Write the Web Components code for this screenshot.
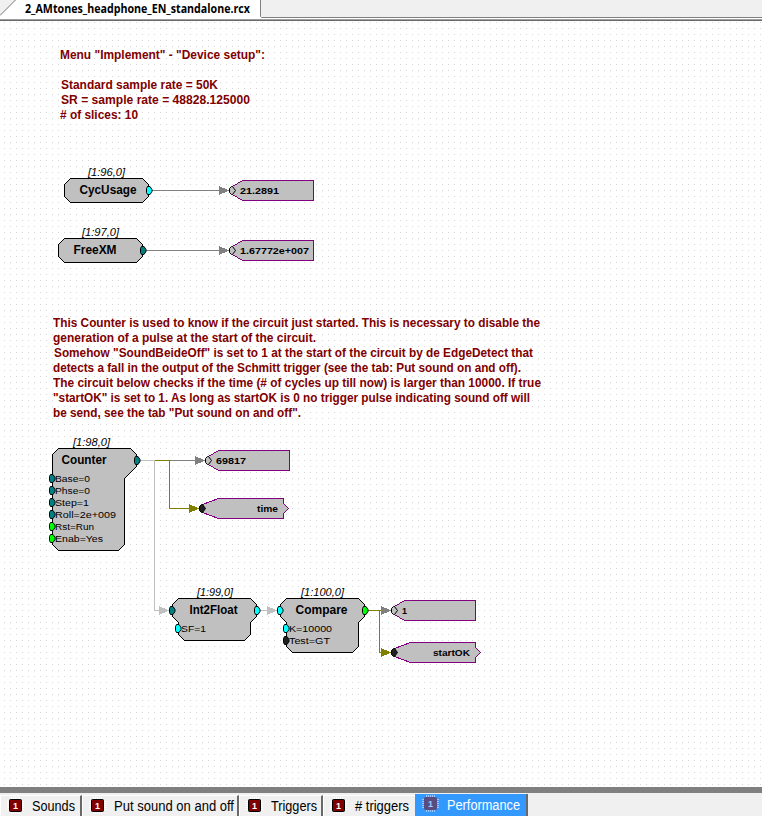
<!DOCTYPE html>
<html lang="en">
<head>
<meta charset="utf-8">
<title>2_AMtones_headphone_EN_standalone.rcx</title>
<style>
html,body{margin:0;height:100%;overflow:hidden;background:#fff}
body{font-family:"Liberation Sans",Arial,sans-serif;color:#000}
</style>
</head>
<body>
<circuit-app>
  <document-tab slot="top">2_AMtones_headphone_EN_standalone.rcx</document-tab>
  <circuit-canvas>
    <circuit-wires></circuit-wires>
    <circuit-note style="left:60px;top:47px" widths="205,0,157,189,78" indents="0,0,1,1,0">Menu "Implement" - "Device setup":||Standard sample rate = 50K|SR = sample rate = 48828.125000|# of slices: 10</circuit-note>
    <circuit-note style="left:53px;top:315px" widths="487,263,479,468,488,477,248" indents="0,0,1,0,0,0,0">This Counter is used to know if the circuit just started. This is necessary to disable the|generation of a pulse at the start of the circuit.|Somehow "SoundBeideOff" is set to 1 at the start of the circuit by de EdgeDetect that|detects a fall in the output of the Schmitt trigger (see the tab: Put sound on and off).|The circuit below checks if the time (# of cycles up till now) is larger than 10000. If true|"startOK" is set to 1. As long as startOK is 0 no trigger pulse indicating sound off will|be send, see the tab "Put sound on and off".</circuit-note>

    <circuit-block style="left:58px;top:164px" name="CycUsage" nx="22" nw="57" tag="[1:96,0]" tx="30" tw="37"
      shape="12.5,14.5 84.5,14.5 90.5,20.5 90.5,32.5 84.5,38.5 12.5,38.5 6.5,32.5 6.5,20.5" ports="91,26,#00ffff"></circuit-block>
    <circuit-block style="left:52px;top:224px" name="FreeXM" nx="22" nw="43" tag="[1:97,0]" tx="30" tw="37"
      shape="12.5,14.5 84.5,14.5 90.5,20.5 90.5,32.5 84.5,38.5 12.5,38.5 6.5,32.5 6.5,20.5" ports="91,26,#008080"></circuit-block>
    <circuit-block style="left:46px;top:434px" name="Counter" nx="16" nw="45" tag="[1:98,0]" tx="27" tw="37"
      shape="12.5,14.5 84.5,14.5 90.5,20.5 90.5,32.5 78.5,44.5 78.5,110.5 72.5,116.5 12.5,116.5 6.5,110.5 6.5,20.5"
      ports="91,26,#008080;6,44,#008080;6,56,#008080;6,68,#008080;6,80,#008080;6,92,#00ff00;6,104,#00ff00"
      params="9,44,35,Base=0;9,56,35,Phse=0;9,68,34,Step=1;9,80,61,Roll=2e+009;9,92,39,Rst=Run;9,104,48,Enab=Yes"></circuit-block>
    <circuit-block style="left:166px;top:584px" name="Int2Float" nx="24" nw="48" tag="[1:99,0]" tx="31" tw="36"
      shape="12.5,14.5 84.5,14.5 90.5,20.5 90.5,32.5 84.5,38.5 84.5,50.5 78.5,56.5 18.5,56.5 12.5,50.5 12.5,38.5 6.5,32.5 6.5,20.5"
      ports="91,26,#00ffff;6,26,#008080;12,44,#00ffff" params="15,44,25,SF=1"></circuit-block>
    <circuit-block style="left:274px;top:584px" name="Compare" nx="22" nw="52" tag="[1:100,0]" tx="27" tw="43"
      shape="12.5,14.5 84.5,14.5 90.5,20.5 90.5,32.5 84.5,38.5 84.5,62.5 78.5,68.5 18.5,68.5 12.5,62.5 12.5,38.5 6.5,32.5 6.5,20.5"
      ports="91,26,#00ff00;6,26,#00ffff;12,44,#00ffff;12,56,#202020" params="15,44,43,K=10000;15,56,41,Test=GT"></circuit-block>

    <value-flag style="left:228px;top:180px" tw="39">21.2891</value-flag>
    <value-flag style="left:228px;top:240px" tw="69">1.67772e+007</value-flag>
    <value-flag style="left:204px;top:450px" tw="30">69817</value-flag>
    <value-flag style="left:390px;top:600px" tw="5">1</value-flag>
    <value-flag out style="left:198px;top:498px" tw="21" tx="59">time</value-flag>
    <value-flag out style="left:390px;top:642px" tw="37" tx="43">startOK</value-flag>
  </circuit-canvas>
  <page-bar slot="bottom">
    <page-tab style="width:82px" tw="43">Sounds</page-tab>
    <page-tab style="width:157px" tw="120">Put sound on and off</page-tab>
    <page-tab style="width:84px" tw="46">Triggers</page-tab>
    <page-tab style="width:92px" tw="54" last># triggers</page-tab>
    <page-tab style="width:113px" tw="73" active>Performance</page-tab>
  </page-bar>
</circuit-app>

<script>
const fitText = (x, y, w, text, cls) =>
  `<text class="${cls}" x="${x}" y="${y}" textLength="${w}" lengthAdjust="spacingAndGlyphs">${text}</text>`;
const define = (name, render) => customElements.define(name, class extends HTMLElement {
  connectedCallback() {
    if (!this.shadowRoot) this.attachShadow({mode: 'open'}).innerHTML = render(this);
  }
});

define('circuit-app', () => `<style>
:host{display:grid;grid-template-rows:21px 1fr 29px;width:762px;height:816px}
</style><slot name="top"></slot><slot></slot><slot name="bottom"></slot>`);

define('document-tab', e => `<style>
:host{display:block;height:21px;background:#f0f0f0}
svg{display:block}
text{font:bold 12.500px "Open Sans","Noto Sans",sans-serif;fill:#000}
</style><svg width="762" height="21">
<path d="M0 16L15.5 0H260V17H762V19H0Z" fill="#fff"/>
<path d="M0 15.5L15.5 0" stroke="#777" fill="none"/>
<path d="M260.5 0V16.500L261.500 17.500H762" stroke="#808080" fill="none"/>
<rect y="19" width="762" height="1" fill="#a0a0a0"/><rect y="20" width="762" height="1" fill="#696969"/>
${fitText(25, 12.5, 225, e.textContent, '')}</svg>`);

define('circuit-canvas', () => `<style>
:host{display:block;position:relative;overflow:hidden;
background:conic-gradient(from 270deg at 1px 1px,#d8d8d8 90deg,#fff 0) 4px 1px/6px 6px}
.layer{position:absolute;left:0;top:-21px;width:762px;height:787px}
</style><div class="layer"><slot></slot></div>`);

define('circuit-wires', () => `<style>
:host{display:block;position:absolute;left:0;top:0}
svg{display:block;shape-rendering:crispEdges}path{fill:none}
</style><svg width="762" height="787">
<path d="M152 190.500H220M146 250.500H220M170 460.500H196" stroke="#808080"/>
<path d="M140 460.500H155M154.500 460V610.500H160M260 610.500H268" stroke="#c0c0c0"/>
<path d="M155 460.500H169.500V508.500H190M368 610.500H379.500V652.500H382M379 610.500H382" stroke="#808000"/>
<path style="fill:#808080" d="M219 186L229 190.500L219 195Z M219 246L229 250.500L219 255Z M195 456L205 460.500L195 465Z M381 606L391 610.500L381 615Z"/>
<path style="fill:#c0c0c0" d="M159 606L169 610.500L159 615Z M267 606L277 610.500L267 615Z"/>
<path style="fill:#808000" d="M189 504L199 508.500L189 513Z M381 648L391 652.500L381 657Z"/>
</svg>`);

define('circuit-note', e => {
  const widths = e.getAttribute('widths').split(','), indents = e.getAttribute('indents').split(',');
  const lines = e.textContent.split('|');
  return `<style>
:host{display:block;position:absolute}
svg{display:block}text{font:bold 12px "Liberation Sans",Arial,sans-serif;fill:#800000}
</style><svg width="500" height="${lines.length * 15}">${lines.map((t, i) =>
    t ? fitText(+indents[i], 12 + i * 15, widths[i], t, '') : '').join('')}</svg>`;
});

define('circuit-block', e => {
  const a = n => e.getAttribute(n), list = n => (a(n) || '').split(';').filter(Boolean).map(s => s.split(','));
  return `<style>
:host{display:block;position:absolute}
svg{display:block;overflow:visible}
.body,.port{stroke:#000}.body{fill:#c0c0c0;shape-rendering:crispEdges}
text{font-family:"Liberation Sans",Arial,sans-serif;fill:#000}
.name{font-size:12.500px;font-weight:bold}.tag{font-size:10px;font-style:italic}.param{font-size:9.600px}
</style><svg width="100" height="120">
<polygon class="body" points="${a('shape')}"/>
${list('ports').map(([x, y, c]) => `<path class="port" fill="${c}" transform="translate(${x} ${y})" d="M-1.500 -3.500H1L3 -.5V1.500L1 4.500H-1.500L-2.500 2.500V-1.500Z"/>`).join('')}
${fitText(a('nx') - .5, 30, a('nw'), a('name'), 'name')}
${fitText(a('tx'), 11.5, a('tw'), a('tag'), 'tag')}
${list('params').map(([x, y, w, t]) => fitText(x, +y + 4, w, t, 'param')).join('')}
</svg>`;
});

define('value-flag', e => {
  const out = e.hasAttribute('out');
  return `<style>
:host{display:block;position:absolute}
svg{display:block;overflow:visible}.body{shape-rendering:crispEdges}
text{font:bold 9.600px "Liberation Sans",Arial,sans-serif;fill:#000}
</style><svg width="92" height="22">
<path class="body" fill="#c0c0c0" stroke="#800080" d="${out
    ? 'M4.500 6.500L20.500 .5H85.500V5.500L90.500 10.500L85.500 15.500V20.500H20.500L4.500 14.500Z'
    : 'M4.500 6.500L14.500 .5H85.500V20.500H14.500L4.500 14.500Z'}"/>
<path fill="${out ? '#202020' : '#c0c0c0'}" stroke="#000" d="M1.500 8.500L3.500 6.500H4.500L7.500 10.500L4.500 14.500H3.500L1.500 12.500Z"/>
${fitText(e.getAttribute('tx') || 12, 14, e.getAttribute('tw'), e.textContent, '')}</svg>`;
});

define('page-bar', () => `<style>
:host{display:flex;height:29px;box-sizing:border-box;border-top:6px solid #808080;background:#f0f0f0;overflow:hidden}
</style><slot></slot>`);

define('page-tab', e => {
  const on = e.hasAttribute('active'), ty = on ? 16 : 18, cy = on ? 9 : 12;
  const pins = [-4, -2, 0, 2, 4].map(d => `M${15.5 + d} ${cy - 8}v17M7 ${cy + .5 + d}h17`).join('');
  return `<style>
:host{display:block;box-sizing:border-box;height:23px;flex:none;background:${on ? '#3399ff' : '#f0f0f0'};
${on ? 'margin-top:1px' : 'margin-top:2px;border-top:1px solid #fff;border-left:1px solid #fff'};
${e.hasAttribute('last') ? '' : 'border-right:2px solid #696969'}}
svg{display:block;overflow:visible;margin-top:${on ? 0 : -3}px;margin-left:${on ? 0 : -1}px}
text{font:14px "Liberation Sans",Arial,sans-serif;fill:${on ? '#fff' : '#000'}}
.digit{font-size:9px;font-weight:bold;fill:${on ? '#99ccff' : '#fff'}}
</style><svg width="100%" height="23">
<path d="${pins}" stroke="${on ? '#99ccff' : '#fff'}"/>
<rect x="9.500" y="${cy - 5.500}" width="12" height="12" rx="1" fill="${on ? '#5a4c80' : '#800000'}" stroke="${on ? '#5a4c80' : '#000'}"/>
<text class="digit" x="13" y="${cy + 4}">1</text>
${fitText(32, ty, e.getAttribute('tw'), e.textContent, '')}</svg>`;
});
</script>
</body>
</html>
